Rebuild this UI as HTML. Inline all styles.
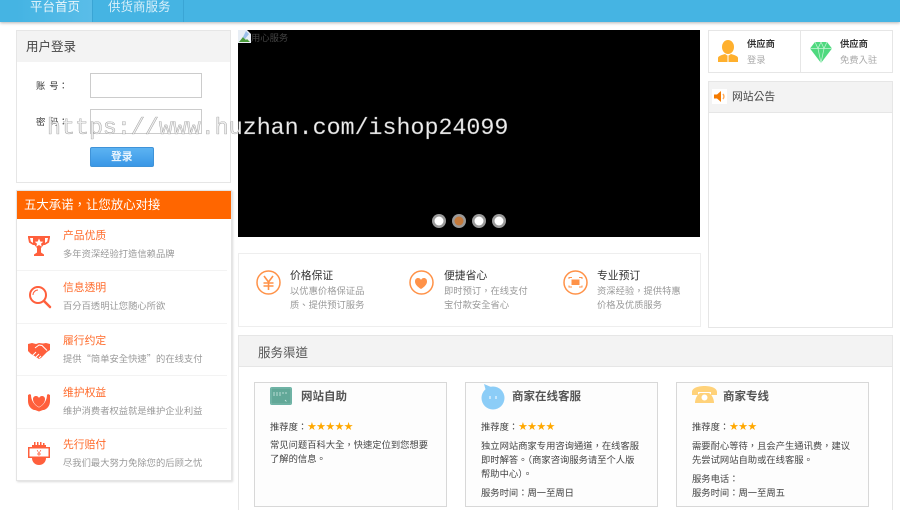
<!DOCTYPE html>
<html><head><meta charset="utf-8">
<style>
*{box-sizing:border-box;margin:0;padding:0}
html,body{width:900px;height:510px;overflow:hidden;background:#fff}
body{position:relative;font-family:"Liberation Sans","Noto Sans CJK TC",sans-serif;color:#333}
#w{position:absolute;left:0;top:0;width:900px;height:510px;overflow:hidden;background:#fff;filter:blur(.3px)}
.a{position:absolute}
.t{position:absolute;white-space:nowrap;line-height:14px}
.box{position:absolute;border:1px solid #e6e6e6;background:#fff}
.hd{position:absolute;background:#f3f3f3;border-bottom:1px solid #e6e6e6}
.pt{font-size:10.8px;color:#ff6a2a}
.pd{font-size:9.3px;color:#999}
.ft{font-size:10.8px;color:#333}
.fd{font-size:9.3px;color:#999}
.card{position:absolute;top:382px;width:193px;height:125px;border:1px solid #d8d8d8;background:#fdfdfd}
.ct{font-size:11.5px;font-weight:bold;color:#555}
.cd{font-size:9.3px;color:#444}
.st{font-size:11px;color:#ffa800;letter-spacing:-.7px;font-family:"DejaVu Sans",sans-serif}
.q{font-family:"Noto Sans CJK TC",sans-serif}
svg{position:absolute;display:block}
</style></head><body><div id="w">

<div class="a" style="left:0;top:0;width:900px;height:22px;background:#45b4e3;box-shadow:0 1px 3px rgba(0,0,0,.3)"></div>
<div class="a" style="left:17px;top:0;width:76px;height:22px;background:linear-gradient(90deg,#45b4e3,#5abde8);border-right:1px solid #3aa5d5"></div>
<div class="a" style="left:183px;top:0;width:1px;height:22px;background:#3aa5d5"></div>
<div class="t" style="left:30px;top:0;font-size:12.5px;color:#e6f5fb">平台首页</div>
<div class="t" style="left:108px;top:0;font-size:12.5px;color:#d9f0fa">供货商服务</div>

<!-- login -->
<div class="box" style="left:16px;top:30px;width:215px;height:153px"></div>
<div class="hd" style="left:17px;top:31px;width:213px;height:31px;border-bottom:0"></div>
<div class="t" style="left:26px;top:40px;font-size:12.5px;color:#444">用户登录</div>
<div class="t" style="left:36px;top:79px;font-size:9.3px;color:#333;word-spacing:1.4px">账 号：</div>
<div class="a" style="left:90px;top:73px;width:112px;height:25px;border:1px solid #ccc;background:#fff"></div>
<div class="t" style="left:36px;top:115px;font-size:9.3px;color:#333;word-spacing:1.4px">密 码：</div>
<div class="a" style="left:90px;top:109px;width:112px;height:25px;border:1px solid #ccc;background:#fff"></div>
<div class="a" style="left:90px;top:147px;width:64px;height:20px;background:linear-gradient(#5cb3f2,#3a97e6);border:1px solid #3f93d8;border-radius:2px"></div>
<div class="t" style="left:111px;top:150px;font-size:10.8px;font-weight:bold;color:#e8f4fd">登录</div>

<!-- promise -->
<div class="a" style="left:16px;top:190px;width:216px;height:291px;border:1px solid #e4e4e4;background:#fff;box-shadow:1px 1px 2px rgba(0,0,0,.15)"></div>
<div class="a" style="left:17px;top:191px;width:214px;height:28px;background:#ff6600"></div>
<div class="t" style="left:24px;top:198px;font-size:12.4px;color:#fff">五大承诺，让您放心对接</div>
<div class="a" style="left:17px;top:270px;width:210px;height:1px;background:#f3f3f3"></div>
<div class="a" style="left:17px;top:323px;width:210px;height:1px;background:#f3f3f3"></div>
<div class="a" style="left:17px;top:375px;width:210px;height:1px;background:#f3f3f3"></div>
<div class="a" style="left:17px;top:428px;width:210px;height:1px;background:#f3f3f3"></div>

<svg style="left:28px;top:235px" width="24" height="24" viewBox="0 0 24 24" fill="#ff5f3c"><path d="M0 1h22v1.500l-1 5-4 2.500h-1.500L13 13v4.500l3 2V21H6v-1.500l3-2V13L6.500 10H5L1 7.500 0 2.500zM2 3l.8 3.500L5 8V3zm15 0v5l2.200-1.500L20 3z"/><path d="M11 3.500l1.300 3 3 .2-2.300 2 .8 3-2.800-1.700-2.800 1.700.8-3-2.300-2 3-.2z" fill="#fff"/></svg>
<svg style="left:28px;top:285px" width="24" height="24" viewBox="0 0 24 24" fill="none" stroke="#ff5f3c"><circle cx="10" cy="10" r="8" stroke-width="2"/><path d="M16 16l6 6" stroke-width="2.500" stroke-linecap="round"/><path d="M5 10a5 5 0 0 1 5-5" stroke-width="1"/></svg>
<svg style="left:28px;top:342px" width="22" height="18" viewBox="0 0 22 18" fill="#ff5f3c"><path d="M0 2l4-1 4 1 3-1 4 .500 3-.500 4 1v6l-3 2-6 6-2 1-3-2-3-2-2-1-3-3z"/><path d="M7 6l4-3 3 .500 5 5M8 15l3-3M11 16l2-2M5 13l3-3" fill="none" stroke="#fff" stroke-width="1"/></svg>
<svg style="left:28px;top:392px" width="22" height="20" viewBox="0 0 22 20" fill="#ff5f3c"><path d="M11 15C7 13 5 10 5 7c0-2 1.500-3 3-3 1.500 0 2.500 1 3 2 .5-1 1.500-2 3-2 1.500 0 3 1 3 3 0 3-2 6-6 8z"/><path d="M0 3l2-1 1 1c0 5 3 10 8 12.500C16 13 19 8 19 3l1-1 2 1v6c0 5-3 8-6 9h-1l-4 1.500L7 18H6c-3-1-6-4-6-9z"/></svg>
<svg style="left:28px;top:442px" width="22" height="24" viewBox="0 0 22 24" fill="#ff5f3c"><path d="M6 0h1.500v4H6zM9 0h1.500v4H9zM12 0h1.500v4H12zM15 1h1.500v3H15zM4 3h14v2H4zM0 5h22v11H0z"/><rect x="1.500" y="6.500" width="19" height="8" fill="#fff"/><path d="M4 16h14c0 4-3 7-7 7s-7-3-7-7z"/><text x="11" y="14" font-size="8" text-anchor="middle" fill="#ff5f3c" font-family="Liberation Sans">¥</text></svg>

<div class="t pt" style="left:63px;top:229px">产品优质</div><div class="t pd" style="left:63px;top:247px">多年资深经验打造信赖品牌</div>
<div class="t pt" style="left:63px;top:281px">信息透明</div><div class="t pd" style="left:63px;top:299px">百分百透明让您随心所欲</div>
<div class="t pt" style="left:63px;top:334px">履行约定</div><div class="t pd" style="left:63px;top:351px">提供<span class="q">“</span>简单安全快速<span class="q">”</span>的在线支付</div>
<div class="t pt" style="left:63px;top:386px">维护权益</div><div class="t pd" style="left:63px;top:404px">维护消费者权益就是维护企业利益</div>
<div class="t pt" style="left:63px;top:438px">先行赔付</div><div class="t pd" style="left:63px;top:456px">尽我们最大努力免除您的后顾之忧</div>

<!-- banner -->
<div class="a" style="left:238px;top:30px;width:462px;height:207px;background:#000"></div>
<svg style="left:238px;top:30px" width="13" height="13" viewBox="0 0 13 13"><path d="M0 0h9l4 4v9H0z" fill="#e8eef5"/><path d="M1 12l4-5 3 3 1-1 3 3z" fill="#4a9a3a"/><path d="M8 1l3 3-4 5-2-2z" fill="#9cc0ea"/></svg>
<div class="t" style="left:251px;top:31px;font-size:9.3px;color:#444">用心服务</div>
<svg style="left:430px;top:212px" width="80" height="18" viewBox="0 0 80 18">
<g fill="#999"><circle cx="9" cy="9" r="7"/><circle cx="29" cy="9" r="7"/><circle cx="49" cy="9" r="7"/><circle cx="69" cy="9" r="7"/></g>
<circle cx="9" cy="9" r="4.500" fill="#fff"/><circle cx="29" cy="9" r="4.500" fill="#c47a3c"/><circle cx="49" cy="9" r="4.500" fill="#fff"/><circle cx="69" cy="9" r="4.500" fill="#fff"/>
</svg>

<!-- features -->
<div class="box" style="left:238px;top:253px;width:463px;height:74px;border-color:#eee"></div>
<svg style="left:255px;top:269px" width="27" height="27" viewBox="0 0 27 27"><circle cx="13.500" cy="13.500" r="11.500" fill="none" stroke="#ff9248" stroke-width="1.500"/><path d="M9 7l4.500 6L18 7M8.500 14h10M8.500 17h10M13.500 13v8" fill="none" stroke="#ff9248" stroke-width="1.600"/></svg>
<svg style="left:408px;top:269px" width="27" height="27" viewBox="0 0 27 27"><circle cx="13.500" cy="13.500" r="11.500" fill="none" stroke="#ff9248" stroke-width="1.500"/><path d="M13 20c-4-2.500-6-5-6-7.500C7 10 8.500 9 10 9c1.300 0 2.500.8 3 2 .5-1.200 1.700-2 3-2 1.500 0 3 1 3 3.500 0 2.500-2 5-6 7.500z" fill="#ff9248"/></svg>
<svg style="left:562px;top:269px" width="27" height="27" viewBox="0 0 27 27"><circle cx="13.500" cy="13.500" r="11.500" fill="none" stroke="#ff9248" stroke-width="1.500"/><path d="M7 10V8.500h3M17 8.500h3V10M7 16.500V18h3M17 18h3v-1.500" fill="none" stroke="#ff9248"/><rect x="9.500" y="10.500" width="8" height="5.500" fill="#ff9248"/></svg>

<div class="t ft" style="left:290px;top:269px">价格保证</div>
<div class="t fd" style="left:290px;top:284px">以优惠价格保证品</div>
<div class="t fd" style="left:290px;top:298px">质、提供预订服务</div>
<div class="t ft" style="left:444px;top:269px">便捷省心</div>
<div class="t fd" style="left:444px;top:284px">即时预订，在线支付</div>
<div class="t fd" style="left:444px;top:298px">宝付款安全省心</div>
<div class="t ft" style="left:597px;top:269px">专业预订</div>
<div class="t fd" style="left:597px;top:284px">资深经验，提供特惠</div>
<div class="t fd" style="left:597px;top:298px">价格及优质服务</div>

<!-- right -->
<div class="box" style="left:708px;top:30px;width:185px;height:43px"></div>
<div class="a" style="left:800px;top:31px;width:1px;height:41px;background:#e6e6e6"></div>
<svg style="left:717px;top:40px" width="22" height="23" viewBox="0 0 22 23"><ellipse cx="11" cy="7" rx="6" ry="7" fill="#ffb02e"/><path d="M1 22v-4c0-2 4-3 7-4l3 2 3-2c3 1 7 2 7 4v4z" fill="#ffb02e"/><path d="M10.500 16h1v6h-1z" fill="#fff"/></svg>
<svg style="left:810px;top:42px" width="22" height="21" viewBox="0 0 22 21"><path d="M5 0h12l5 6.500L11 21 0 6.500z" fill="#4fd97f"/><path d="M0 6.500h22M5 0l3 6.500L11 21l3-14.500L17 0M8 6.500L11 0l3 6.500" fill="none" stroke="#c8f5d8" stroke-width=".7"/></svg>
<div class="t" style="left:747px;top:37px;font-size:9.3px;font-weight:bold;color:#333">供应商</div>
<div class="t" style="left:747px;top:53px;font-size:9.3px;color:#aaa">登录</div>
<div class="t" style="left:840px;top:37px;font-size:9.3px;font-weight:bold;color:#333">供应商</div>
<div class="t" style="left:840px;top:53px;font-size:9.3px;color:#aaa">免费入驻</div>

<div class="box" style="left:708px;top:81px;width:185px;height:247px"></div>
<div class="hd" style="left:709px;top:82px;width:183px;height:31px"></div>
<div class="a" style="left:712px;top:89px;width:15px;height:15px;background:#fff"></div>
<svg style="left:714px;top:91px" width="13" height="11" viewBox="0 0 13 11"><path d="M0 3.500h3L7 0v11L3 7.500H0z" fill="#f47a00"/><path d="M9 3a4 4 0 0 1 0 5" fill="none" stroke="#ffab5a" stroke-width="1.500"/></svg>
<div class="t" style="left:732px;top:90px;font-size:10.8px;color:#444">网站公告</div>

<!-- service -->
<div class="a" style="left:238px;top:335px;width:655px;height:180px;border:1px solid #e6e6e6;background:#fff"></div>
<div class="hd" style="left:239px;top:336px;width:653px;height:31px"></div>
<div class="t" style="left:258px;top:346px;font-size:12.5px;color:#555">服务渠道</div>

<div class="card" style="left:254px"></div>
<div class="card" style="left:465px"></div>
<div class="card" style="left:676px"></div>

<svg style="left:270px;top:387px" width="22" height="18" viewBox="0 0 22 18"><rect width="22" height="18" rx="2" fill="#5eaa9c"/><rect x="1" y="1" width="20" height="16" fill="#62a898" stroke="#9ccdc3" stroke-width=".5"/><path d="M3 6h15M3 8h8M15 13l2 2" stroke="#d5ece7" stroke-width=".8" stroke-dasharray="2 1"/></svg>
<svg style="left:481px;top:384px" width="24" height="26" viewBox="0 0 24 26"><circle cx="12" cy="14" r="11.500" fill="#8ccdf7"/><path d="M3 0l7 3-5 4z" fill="#8ccdf7"/><path d="M9 12v3M15 12v3" stroke="#fff" stroke-width="1"/></svg>
<svg style="left:692px;top:386px" width="25" height="18" viewBox="0 0 25 18"><path d="M0 6C0 2 6 0 12.500 0S25 2 25 6v3h-6V6H6v3H0z" fill="#ffd27a"/><path d="M3 17c0-5 3-9 5-10h9c2 1 5 5 5 10z" fill="#ffd27a"/><circle cx="12.500" cy="11.500" r="3" fill="#fff"/></svg>

<div class="t ct" style="left:301px;top:390px">网站自助</div>
<div class="t cd" style="left:270px;top:420px">推荐度：</div><div class="t st" style="left:307px;top:420px">★★★★★</div>
<div class="t cd" style="left:270px;top:438px">常见问题百科大全，快速定位到您想要</div>
<div class="t cd" style="left:270px;top:452px">了解的信息。</div>

<div class="t ct" style="left:512px;top:390px">商家在线客服</div>
<div class="t cd" style="left:481px;top:420px">推荐度：</div><div class="t st" style="left:518px;top:420px">★★★★</div>
<div class="t cd" style="left:481px;top:439px">独立网站商家专用咨询通道，在线客服</div>
<div class="t cd" style="left:481px;top:453px">即时解答。（商家咨询服务请至个人版</div>
<div class="t cd" style="left:481px;top:467px">帮助中心）。</div>
<div class="t cd" style="left:481px;top:486px">服务时间：周一至周日</div>

<div class="t ct" style="left:723px;top:390px">商家专线</div>
<div class="t cd" style="left:692px;top:420px">推荐度：</div><div class="t st" style="left:729px;top:420px">★★★</div>
<div class="t cd" style="left:692px;top:439px">需要耐心等待，且会产生通讯费，建议</div>
<div class="t cd" style="left:692px;top:453px">先尝试网站自助或在线客服。</div>
<div class="t cd" style="left:692px;top:472px">服务电话：</div>
<div class="t cd" style="left:692px;top:486px">服务时间：周一至周五</div>

<!-- watermark -->
<div class="a" style="left:47px;top:113px;white-space:nowrap;line-height:30px;font-family:'Liberation Mono',monospace;font-size:23.3px;color:#eee;-webkit-text-stroke:.35px #888">https://www.huzhan.com/ishop24099</div>
</div></body></html>
